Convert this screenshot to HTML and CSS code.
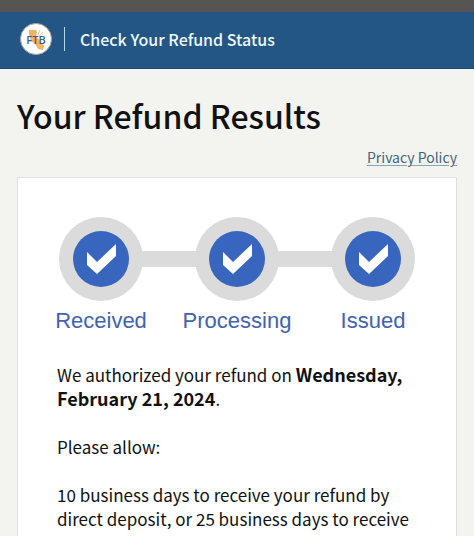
FILE: index.html
```html
<!DOCTYPE html>
<html lang="en">
<head>
<meta charset="utf-8">
<meta name="viewport" content="width=device-width, initial-scale=1">
<title>Check Your Refund Status</title>
<link rel="stylesheet" href="styles.css">
</head>
<body>
<div class="topbar"></div>
<header class="header">
  <svg class="logo" viewBox="0 0 32 32" role="img" aria-label="FTB">
    <circle cx="16" cy="16" r="15.5" fill="#fff" stroke="#a9a29a"/>
    <path d="M9 7h7v6l8 10-1 4-5-1-2-4-5-4-2-6z" fill="#f2b45c"/>
    <path d="M17 12l-1-5M18 12l2-5M19 13l4-4" stroke="#e6c491" stroke-width="1"/>
    <text x="16" y="21" text-anchor="middle" class="logo-text">FTB</text>
  </svg>
  <span class="divider"></span>
  <span class="app-name">Check Your Refund Status</span>
</header>
<main class="main">
  <h1 class="title">Your Refund Results</h1>
  <div class="links"><a class="privacy" href="#">Privacy Policy</a></div>
  <section class="card">
    <ol class="steps">
      <li class="step">
        <span class="ring"><svg class="check" viewBox="0 0 56 56" aria-hidden="true"><circle cx="28" cy="28" r="28"/><path d="M14 21l10 10 19-18v12L24 43 14 34z"/></svg></span>
        <span class="label">Received</span>
      </li>
      <li class="step">
        <span class="ring"><svg class="check" viewBox="0 0 56 56" aria-hidden="true"><circle cx="28" cy="28" r="28"/><path d="M14 21l10 10 19-18v12L24 43 14 34z"/></svg></span>
        <span class="label">Processing</span>
      </li>
      <li class="step">
        <span class="ring"><svg class="check" viewBox="0 0 56 56" aria-hidden="true"><circle cx="28" cy="28" r="28"/><path d="M14 21l10 10 19-18v12L24 43 14 34z"/></svg></span>
        <span class="label">Issued</span>
      </li>
    </ol>
    <div class="message">
      <p>We authorized your refund on <strong>Wednesday, February 21, 2024</strong>.</p>
      <p>Please allow:</p>
      <p>10 business days to receive your refund by direct deposit, or 25 business days to receive</p>
    </div>
  </section>
</main>
</body>
</html>
```
FILE: styles.css
```css
* {
  box-sizing: border-box;
}

body {
  margin: 0;
  min-height: 100vh;
  display: flex;
  flex-direction: column;
  background: #f3f4ef;
  color: #111;
  font-family: "Noto Sans CJK SC", "Noto Sans", sans-serif;
}

.topbar {
  height: 12px;
  background: #575553;
}

.header {
  display: flex;
  align-items: center;
  height: 57px;
  padding: 0 20px 3px;
  background: #245685;
  border-bottom: 1px solid #1d4a75;
}

.logo {
  width: 32px;
  height: 32px;
}

.logo-text {
  font: 600 11px "Open Sans", sans-serif;
  fill: #3a5f8a;
}

.divider {
  width: 1px;
  height: 24px;
  margin: 0 15px 0 12px;
  background: #b9d3e8;
}

.app-name {
  color: #eef8ff;
  font-size: 16px;
  font-weight: 500;
  line-height: 24px;
}

.main {
  flex: 1;
  display: flex;
  flex-direction: column;
  padding: 24px 17px 0;
}

.title {
  margin: 0;
  font-size: 32px;
  font-weight: 500;
  line-height: 44px;
}

.links {
  display: flex;
  justify-content: flex-end;
  padding: 8px 0;
}

.privacy {
  color: #456479;
  font-size: 14px;
  line-height: 24px;
  text-decoration-color: #8ba3b3;
  text-decoration-thickness: 1px;
  text-underline-offset: 2px;
}

.card {
  flex: 1;
  padding: 39px 15px 0;
  background: #fff;
  border: 1px solid #dfe0e1;
  border-bottom: 0;
}

.steps {
  display: grid;
  grid-template-columns: repeat(3, 1fr);
  margin: 0;
  padding: 0;
  list-style: none;
}

.step {
  display: flex;
  flex-direction: column;
  align-items: center;
  background: linear-gradient(#dbdbdb, #dbdbdb) 0 34px / 100% 16px no-repeat;
}

.step:first-child {
  background-position: 100% 34px;
  background-size: 50% 16px;
}

.step:last-child {
  background-size: 50% 16px;
}

.ring {
  display: grid;
  place-items: center;
  width: 84px;
  height: 84px;
  border-radius: 50%;
  background: #dbdbdb;
}

.check {
  width: 56px;
  height: 56px;
}

.check circle {
  fill: #3866bf;
}

.check path {
  fill: #fff;
}

.label {
  margin-top: 6px;
  color: #4263ae;
  font-family: "Liberation Sans", sans-serif;
  font-size: 22px;
  line-height: 28px;
}

.message {
  padding: 28px 24px 0;
  font-size: 17px;
  line-height: 24px;
}

.message p {
  margin: 0 0 24px;
}

.message p:last-child {
  margin: 0;
}

.message strong {
  font-size: 18px;
  line-height: 1;
}
```
